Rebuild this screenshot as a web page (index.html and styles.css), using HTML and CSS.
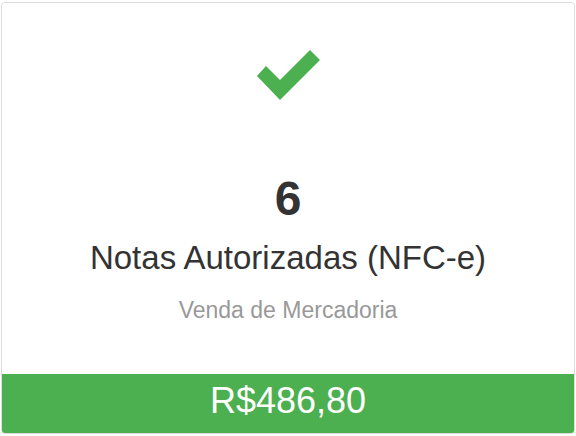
FILE: index.html
```html
<!DOCTYPE html>
<html lang="pt-BR">

<head>
  <meta charset="UTF-8">
  <meta name="viewport" content="width=device-width, initial-scale=1.0">
  <title>Notas Autorizadas</title>
  <link rel="stylesheet" href="styles.css">
</head>

<body>
  <div class="card">
    <div class="card-body">
      <svg class="check" width="65" height="52" viewBox="0 0 65 52">
        <polygon points="1,27 10,17 24,31 54,1 64,11 24,51" fill="#4caf50" />
      </svg>
      <div class="count">6</div>
      <div class="title">Notas Autorizadas (NFC-e)</div>
      <div class="subtitle">Venda de Mercadoria</div>
    </div>
    <div class="card-footer">R$486,80</div>
  </div>
</body>

</html>
```

FILE: styles.css
```css
body {
  font-family: "Liberation Sans", Arial, sans-serif;
  margin: 0;
  padding: 2px 1px 0 1px;
  background-color: #fff;
}

.card {
  height: 432px;
  box-sizing: border-box;
  border: 1px solid #ddd;
  border-radius: 4px;
  overflow: hidden;
  display: flex;
  flex-direction: column;
  background-color: #fff;
}

.card-body {
  flex: 1;
  display: flex;
  flex-direction: column;
  align-items: center;
  padding-top: 46px;
  text-align: center;
}

.check {
  display: block;
}

.count {
  margin-top: 72px;
  font-size: 48px;
  line-height: 52px;
  font-weight: bold;
  color: #333;
}

.title {
  margin-top: 14px;
  font-size: 33px;
  line-height: 38px;
  color: #333;
}

.subtitle {
  margin-top: 20px;
  font-size: 23px;
  line-height: 26px;
  color: #999;
}

.card-footer {
  height: 59px;
  box-sizing: border-box;
  padding-top: 7px;
  background-color: #4caf50;
  color: #fff;
  font-size: 36px;
  line-height: 40px;
  text-align: center;
}
```
